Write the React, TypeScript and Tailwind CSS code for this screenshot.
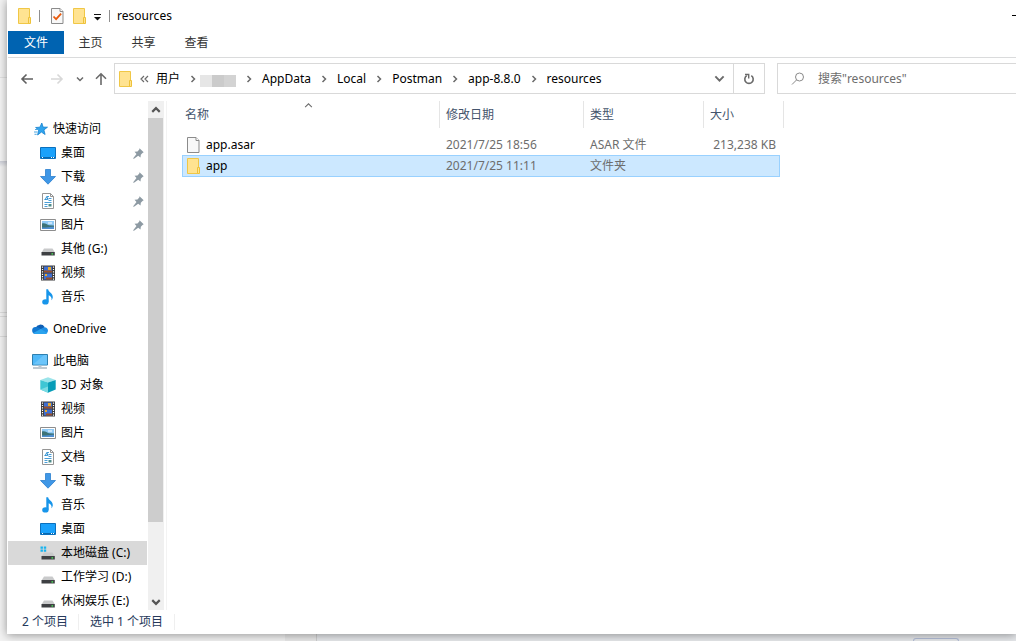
import type { ReactNode } from "react";

type IconName =
    | "star" | "desktop" | "download" | "document" | "picture" | "drive" | "system"
    | "video" | "music" | "onedrive" | "pc" | "cube";

type NavItem = {
    label: string;
    icon: IconName;
    pinned?: boolean;
    selected?: boolean;
};

type NavGroup = {
    root: NavItem;
    children: NavItem[];
};

type FileRow = {
    name: string;
    date: string;
    type: string;
    size: string;
    folder: boolean;
    selected: boolean;
};

const groups: NavGroup[] = [
    {
        root: { label: "快速访问", icon: "star" },
        children: [
            { label: "桌面", icon: "desktop", pinned: true },
            { label: "下载", icon: "download", pinned: true },
            { label: "文档", icon: "document", pinned: true },
            { label: "图片", icon: "picture", pinned: true },
            { label: "其他 (G:)", icon: "drive" },
            { label: "视频", icon: "video" },
            { label: "音乐", icon: "music" },
        ],
    },
    { root: { label: "OneDrive", icon: "onedrive" }, children: [] },
    {
        root: { label: "此电脑", icon: "pc" },
        children: [
            { label: "3D 对象", icon: "cube" },
            { label: "视频", icon: "video" },
            { label: "图片", icon: "picture" },
            { label: "文档", icon: "document" },
            { label: "下载", icon: "download" },
            { label: "音乐", icon: "music" },
            { label: "桌面", icon: "desktop" },
            { label: "本地磁盘 (C:)", icon: "system", selected: true },
            { label: "工作学习 (D:)", icon: "drive" },
            { label: "休闲娱乐 (E:)", icon: "drive" },
        ],
    },
];

// the empty entry is the hidden user name
const crumbs = ["用户", "", "AppData", "Local", "Postman", "app-8.8.0", "resources"];

const files: FileRow[] = [
    { name: "app.asar", date: "2021/7/25 18:56", type: "ASAR 文件", size: "213,238 KB", folder: false, selected: false },
    { name: "app", date: "2021/7/25 11:11", type: "文件夹", size: "", folder: true, selected: true },
];

function FolderIcon() {
    return (
        <svg width="14" height="16" viewBox="0 0 14 16" className="shrink-0" aria-hidden="true">
            <path d="M.5.5h11v15H.5z" fill="#ffe391" stroke="#f0c746" />
            <path d="M10.5 9.5h2v6h-2z" fill="#ffe391" stroke="#eec23a" />
        </svg>
    );
}

function FileIcon({ checked = false }: { checked?: boolean }) {
    return (
        <svg width="13" height="16" viewBox="0 0 13 16" className="shrink-0" aria-hidden="true">
            <path d="M.5.5h8.500l3 3v12H.5z" fill="#f8f8f8" stroke="#8b8b8b" />
            <path d="M9 .5v3h3" fill="#fff" stroke="#8b8b8b" />
            {checked && <path d="M2.500 8.500l2.600 2.700 5-5.600" fill="none" stroke="#e8590c" strokeWidth="1.800" />}
        </svg>
    );
}

function Chevron({ dir, size = 8, color = "#6a6a6a", weight = 1.5 }: { dir: "right" | "down" | "up"; size?: number; color?: string; weight?: number }) {
    const d = {
        right: "M2.5 1l3 3-3 3",
        down: "M1 2.5l3 3 3-3",
        up: "M1 5.5l3-3 3 3",
    }[dir];
    return (
        <svg width={size} height={size} viewBox="0 0 8 8" className="shrink-0" aria-hidden="true">
            <path d={d} fill="none" stroke={color} strokeWidth={weight} />
        </svg>
    );
}

function Arrow({ dir, color }: { dir: "left" | "right" | "up"; color: string }) {
    const d = {
        left: "M13 7H2M6.5 2.5L2 7l4.500 4.500",
        right: "M1 7h11M7.5 2.5L12 7l-4.500 4.500",
        up: "M7 13V2M2 6.8L7 1.8l5 5",
    }[dir];
    return (
        <svg width="14" height="14" viewBox="0 0 14 14" aria-hidden="true">
            <path d={d} fill="none" stroke={color} strokeWidth="1.600" />
        </svg>
    );
}

function PinIcon() {
    return (
        <svg width="11" height="11" viewBox="0 0 11 11" aria-hidden="true">
            <path d="M6.500.3l4.200 4-1.200.6-1.700 1.900-.3 2.800-2.300-1.900L1 10.700l-.8.1.2-.9 3.100-4L1.500 3.700l3-.3 1.800-1.800z" fill="#8d9aa3" />
        </svg>
    );
}

const drive = (
    <>
        <path d="M4 7.500h8.500l2.300 3.700H1.700z" fill="#c9cacb" />
        <path d="M1.500 11h13.300v3.500H1.500z" fill="#3e4043" />
        <path d="M11.500 12.200h1.600v1.400h-1.600z" fill="#4ce05a" />
    </>
);

const drawings: Record<IconName, ReactNode> = {
    star: (
        <>
            <path d="M9.800 2l1.300 4.100 4.400.1-3.600 2.700 1.200 4.600-3.700-2.400L5.600 14l1.100-4.900L3.600 6.500l4.300-.3z" fill="#2fa4ee" stroke="#1581cf" strokeWidth=".8" />
            <path d="M3 8.500h3M2 11h3.500M2.500 13.300h2.200" stroke="#4ba6e2" />
        </>
    ),
    desktop: (
        <>
            <path d="M.5 2.500h15v11H.5z" fill="#1aa1fb" stroke="#0b70bd" />
            <path d="M1 12.500h14" stroke="#0867ad" />
            <path d="M2 12.500h1M11 12.500h1M13 12.500h1" stroke="#fff" />
        </>
    ),
    download: <path d="M5.500.5h5v7h5L8 15.200.5 7.500h5z" fill="#3f97e6" stroke="#2b7fce" strokeWidth=".8" />,
    document: (
        <>
            <path d="M2.500.5h8l3 3v12h-11z" fill="#fff" stroke="#959595" />
            <path d="M10.500.5v3h3" fill="none" stroke="#959595" />
            <path d="M7 3.500h2M4.500 6.500h3M8.500 5.500h3M8.500 7.500h3M4.500 9.500h7M4.500 11.500h3M4.500 13.500h3" stroke="#4a9ed6" />
            <path d="M5 7l1.800-3.500L8 7" fill="none" stroke="#2d8fd1" />
            <path d="M8.500 11h3v2.500h-3z" fill="#4f8c8a" />
        </>
    ),
    picture: (
        <>
            <path d="M.5 2.500h15v11H.5z" fill="#fff" stroke="#8d8d8d" />
            <path d="M2 4h12v8H2z" fill="#8fc9f5" />
            <path d="M2 6.500c3-.8 5 1 7 1.800l5 .2V11H2z" fill="#3d7378" />
            <path d="M2 10.500c4 .5 8-1.300 12-.7V12H2z" fill="#4f8fd0" />
            <path d="M8 6h4" stroke="#fff" />
        </>
    ),
    drive,
    system: (
        <>
            {drive}
            <path d="M.5 1.500h2.400v2.200H.5zM3.800 1.500h2.400v2.200H3.800zM.5 4.600h2.400v2.200H.5zM3.800 4.600h2.400v2.200H3.800z" fill="#16b4f0" />
        </>
    ),
    video: (
        <>
            <path d="M1 .5h14v15H1z" fill="#3a3a3c" />
            <path d="M2.500 1.500v14M13.500 1.500v14" stroke="#fff" strokeWidth="1.200" strokeDasharray="1.200 1.200" />
            <path d="M4 1.500h8v6H4zM4 8.500h8v6H4z" fill="#3f6fd1" />
            <path d="M4 5.500h8v2H4zM6 12.500h6v2H6z" fill="#99502a" />
            <path d="M8 2h3v3H8zM5 9h2v2H5z" fill="#e7a92e" />
        </>
    ),
    music: (
        <>
            <path d="M6.300.3h1.800c.5 3 4.600 3.700 4.700 7.600 0 1.300-.6 2.500-1.300 3.300.5-2.600-.9-4.300-2.800-4.900v6.500H6.300z" fill="#1795ea" />
            <ellipse cx="5.400" cy="12.900" rx="3.200" ry="2.600" fill="#1795ea" />
        </>
    ),
    onedrive: (
        <>
            <path d="M3.600 7A5 5 0 0 1 12.600 6l-3 4z" fill="#0f5fb5" />
            <path d="M3.600 12.800A3.400 3.400 0 0 1 3.500 6c1.500-.2 2.600.3 3.800 1.100l5 3z" fill="#1277d0" />
            <path d="M12 6.200a3.400 3.400 0 0 1 4 3.300c0 2-1.400 3.400-3.400 3.400L7 9z" fill="#1f8fe6" />
            <path d="M8.800 8l6.600 4.100c-.7.6-1.600.8-2.600.8H3.600c-1 0-1.800-.3-2.400-.9z" fill="#2aa3ee" />
        </>
    ),
    pc: (
        <>
            <path d="M.5 1.500h15V12H.5z" fill="#4fb8f8" stroke="#2e7fae" />
            <path d="M1 11.500L12 2h3v9.500z" fill="#6cc5fa" />
            <path d="M6.500 12.500h3v1.500h-3z" fill="#b8c6cf" />
            <path d="M1 15h14" stroke="#7e93a2" />
        </>
    ),
    cube: (
        <>
            <path d="M8 .3l7.700 2.700L8 5.500.3 3z" fill="#9be4ea" />
            <path d="M.3 3L8 5.500v10.200L.3 12.600z" fill="#3fc6d4" />
            <path d="M15.700 3L8 5.500v10.200l7.700-3.100z" fill="#079db8" />
            <path d="M.3 12.600L8 9.500v6.200z" fill="#7adbe2" />
        </>
    ),
};

function Icon({ name }: { name: IconName }) {
    return (
        <svg width="16" height="16" viewBox="0 0 16 16" className="shrink-0" aria-hidden="true">
            {drawings[name]}
        </svg>
    );
}

function TitleBar() {
    return (
        <header className="flex h-[31px] shrink-0 items-center pl-[10px]">
            <FolderIcon />
            <span className="ml-[7px] h-3 w-px bg-[#8f8f8f]" />
            <button className="ml-[11px]" aria-label="属性"><FileIcon checked /></button>
            <button className="ml-[9px]" aria-label="新建文件夹"><FolderIcon /></button>
            <button className="ml-[6px]" aria-label="自定义快速访问工具栏">
                <svg width="9" height="8" viewBox="0 0 9 8" className="mt-1" aria-hidden="true">
                    <path d="M1 .5h7" stroke="#111" />
                    <path d="M1 3h7L4.500 6.500z" fill="#111" />
                </svg>
            </button>
            <span className="ml-[7px] h-3 w-px bg-[#8f8f8f]" />
            <h1 className="ml-[7px] flex-1">resources</h1>
            <button aria-label="最小化" className="h-px w-1 bg-black" />
        </header>
    );
}

function RibbonTabs() {
    return (
        <nav className="flex h-[27px] shrink-0 items-start border-b border-[#dadbdc] text-[#333]">
            <button className="h-[23px] w-14 bg-[#0063b1] pt-px text-white">文件</button>
            {["主页", "共享", "查看"].map((tab) => (
                <button key={tab} className="h-[23px] w-[53px] pt-px">{tab}</button>
            ))}
        </nav>
    );
}

function AddressRow() {
    return (
        <div className="mt-[5px] flex h-[31px] shrink-0 items-stretch">
            <div className="flex w-[106px] shrink-0 items-center pl-3">
                <button aria-label="后退"><Arrow dir="left" color="#606060" /></button>
                <button aria-label="前进" className="ml-4"><Arrow dir="right" color="#d8d8d8" /></button>
                <button aria-label="最近浏览的位置" className="ml-3"><Chevron dir="down" /></button>
                <button aria-label="上移" className="ml-[10px]"><Arrow dir="up" color="#6a6a6a" /></button>
            </div>
            <div className="flex min-w-0 flex-1 border border-[#d9d9d9]">
                <div className="flex min-w-0 flex-1 items-center pl-1">
                    <FolderIcon />
                    <svg width="9" height="8" viewBox="0 0 9 8" className="mx-[7px] shrink-0" aria-hidden="true">
                        <path d="M4 1L1 4l3 3M8 1L5 4l3 3" fill="none" stroke="#6a6a6a" strokeWidth="1.200" />
                    </svg>
                    <ol className="flex items-center">
                        {crumbs.map((crumb, i) => (
                            <li key={i} className="flex items-center">
                                {i > 0 && (
                                    <span className="flex w-[26px] justify-center"><Chevron dir="right" /></span>
                                )}
                                {crumb ? (
                                    <button>{crumb}</button>
                                ) : (
                                    <span className="mt-1 -ml-[6px] flex h-3 w-9 bg-[#e6e6e6]">
                                        <span className="ml-3 w-3 bg-[#cbcbcb]" />
                                        <span className="w-3 bg-[#d3d3d3]" />
                                    </span>
                                )}
                            </li>
                        ))}
                    </ol>
                    <button aria-label="以前的位置" className="mr-2 ml-auto"><Chevron dir="down" size={11} weight={1.4} /></button>
                </div>
                <button aria-label="刷新" className="flex w-[31px] shrink-0 items-center justify-center border-l border-[#d9d9d9]">
                    <svg width="12" height="12" viewBox="0 0 12 12" aria-hidden="true">
                        <path d="M8.300 2.700a4.200 4.200 0 1 1-4.600 0" fill="none" stroke="#6a6a6a" strokeWidth="1.600" />
                        <path d="M2 1.500h3.700v3.900" fill="none" stroke="#6a6a6a" strokeWidth="1.400" />
                    </svg>
                </button>
            </div>
            <label className="ml-3 flex w-[239px] shrink-0 items-center border border-r-0 border-[#d9d9d9] pl-[13px]">
                <svg width="14" height="14" viewBox="0 0 14 14" className="shrink-0" aria-hidden="true">
                    <circle cx="8.500" cy="5" r="4" fill="none" stroke="#8a8a8a" />
                    <path d="M5.600 7.900L1 12.500" stroke="#8a8a8a" />
                </svg>
                <input
                    type="text"
                    aria-label="搜索"
                    placeholder={'搜索"resources"'}
                    className="ml-[13px] min-w-0 flex-1 outline-none placeholder:text-[#6d6d6d]"
                />
            </label>
        </div>
    );
}

function NavRow({ item, root = false }: { item: NavItem; root?: boolean }) {
    return (
        <button
            className={`flex h-6 w-full items-center pr-[3px] text-left whitespace-nowrap ${root ? "pl-6" : "pl-8"} ${item.selected ? "bg-[#d9d9d9]" : ""}`}
        >
            <Icon name={item.icon} />
            <span className="ml-[5px] flex-1">{item.label}</span>
            {item.pinned && <PinIcon />}
        </button>
    );
}

function Sidebar() {
    return (
        <aside className="flex w-[159px] shrink-0 border-r border-[#f3f3f3]">
            <nav className="flex w-[139px] flex-col gap-2 overflow-hidden pt-4">
                {groups.map((group) => (
                    <div key={group.root.label} className="shrink-0">
                        <NavRow item={group.root} root />
                        {group.children.map((item) => (
                            <NavRow key={item.label} item={item} />
                        ))}
                    </div>
                ))}
            </nav>
            <div className="ml-px flex w-4 flex-col bg-[#f0f0f0]">
                <button aria-label="向上滚动" className="flex h-[17px] shrink-0 items-center justify-center pr-px">
                    <Chevron dir="up" size={10} color="#555" weight={1.7} />
                </button>
                <div className="min-h-0 flex-1">
                    <div className="mr-px h-[85%] bg-[#cdcdcd]" />
                </div>
                <button aria-label="向下滚动" className="flex h-[17px] shrink-0 items-center justify-center pr-px">
                    <Chevron dir="down" size={10} color="#555" weight={1.7} />
                </button>
            </div>
        </aside>
    );
}

function FileTable() {
    const head = "border-r border-[#e5e5e5] pl-[6px] text-left font-normal";
    return (
        <main className="min-w-0 flex-1 overflow-hidden pl-[15px]">
            <table className="w-[602px] table-fixed border-separate border-spacing-0">
                <colgroup>
                    <col className="w-[258px]" />
                    <col className="w-36" />
                    <col className="w-[120px]" />
                    <col className="w-[76px]" />
                    <col className="w-1" />
                </colgroup>
                <thead className="text-[#44546c]">
                    <tr className="h-[27px]">
                        <th className="relative border-r border-[#e5e5e5] pl-[3px] text-left font-normal">
                            名称
                            <span className="absolute top-0 left-0 flex w-full justify-center pr-1">
                                <Chevron dir="up" size={9} weight={0.9} />
                            </span>
                        </th>
                        <th className={head}>修改日期</th>
                        <th className={head}>类型</th>
                        <th className={head} colSpan={2}>大小</th>
                    </tr>
                </thead>
                <tbody className="text-[#6d6d6d] before:block before:h-[5px]">
                    {files.map((file) => {
                        const edge = file.selected ? "border-y border-[#99d1ff] bg-[#cce8ff]" : "pt-[2px]";
                        return (
                            <tr key={file.name} className="h-[22px]">
                                <td className={`${edge} ${file.selected ? "border-l pl-1" : "pl-[5px]"}`}>
                                    <span className="flex items-center text-black">
                                        <span className="flex w-[19px]">{file.folder ? <FolderIcon /> : <FileIcon />}</span>
                                        {file.name}
                                    </span>
                                </td>
                                <td className={`pl-[6px] ${edge}`}>{file.date}</td>
                                <td className={`pl-[6px] ${edge}`}>{file.type}</td>
                                <td className={`text-right whitespace-nowrap ${edge} ${file.selected ? "border-r" : "pr-1"}`}>{file.size}</td>
                                <td />
                            </tr>
                        );
                    })}
                </tbody>
            </table>
        </main>
    );
}

export default function App() {
    return (
        <div className="flex h-screen flex-col overflow-hidden bg-[#ececec] font-['Noto_Sans','Noto_Sans_CJK_SC',sans-serif] text-[12px] leading-4 text-black">
            <div className="flex min-h-0 flex-1">
                <div className="flex w-[7px] shrink-0 flex-col bg-[#f2f2f2]">
                    <div className="h-[78px] border-b border-[#e2e2e2]" />
                    <div className="h-[83px] bg-[#f5f5f5]" />
                    <div className="h-[6px] bg-linear-to-b from-[#cdcfd8] to-[#f2f2f2]" />
                    <div className="h-[146px] border-b border-[#dcdcdc]" />
                    <div className="h-1 border-b border-[#dcdcdc]" />
                    <div className="h-5 border-b border-[#dcdcdc]" />
                </div>
                <div className="relative flex min-w-0 flex-1 flex-col bg-white pl-px shadow-[0_1px_9px_rgba(0,0,0,0.4)]">
                    <TitleBar />
                    <RibbonTabs />
                    <AddressRow />
                    <div className="mt-[7px] flex min-h-0 flex-1">
                        <Sidebar />
                        <FileTable />
                    </div>
                    <footer className="flex h-6 shrink-0 items-center text-[#26395b]">
                        <span className="border-r border-[#efefef] pr-[10px] pl-[14px]">2 个项目</span>
                        <span className="border-r border-[#efefef] px-[11px]">选中 1 个项目</span>
                    </footer>
                </div>
            </div>
            <div className="flex h-[7px] shrink-0 bg-[#e6e8eb]">
                <div className="w-[285px] bg-[#f2f2f2]" />
                <div className="w-8 border-r border-[#cfcfcf] bg-[#e8e8e8]" />
                <div className="mt-1 mr-[57px] ml-auto w-[46px] rounded-t-sm border border-b-0 border-[#b4bfd8]" />
            </div>
        </div>
    );
}
